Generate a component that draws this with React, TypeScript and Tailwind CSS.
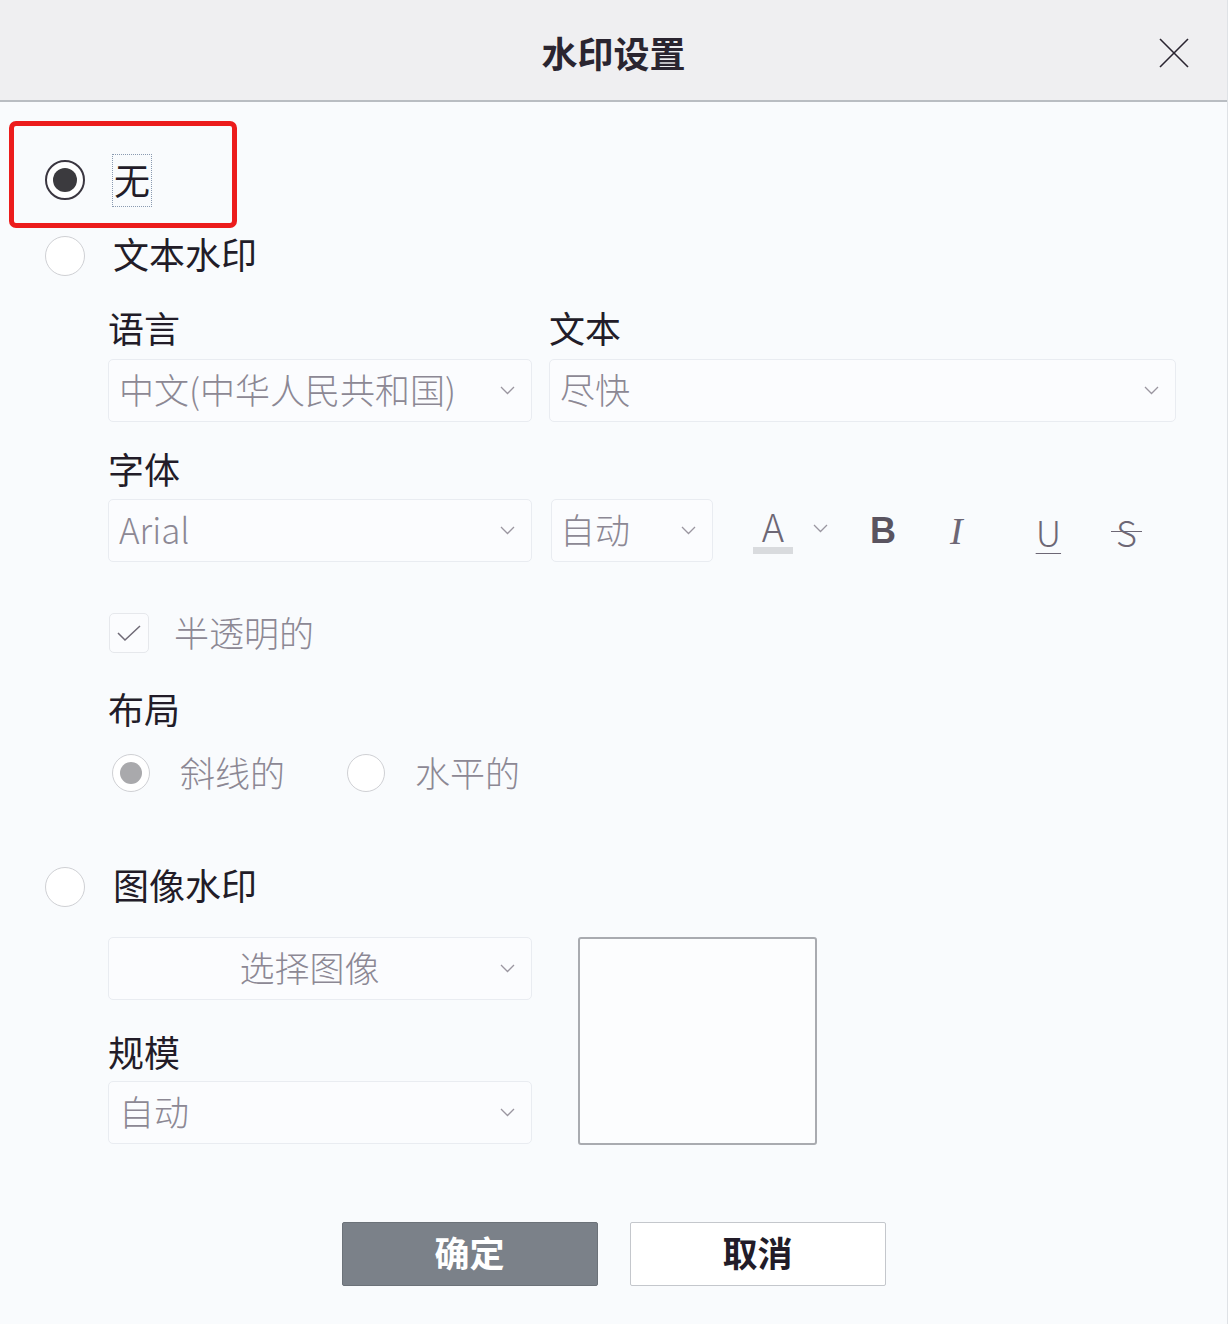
import React from 'react';

const FONT = '"Noto Sans CJK SC", "Noto Sans", sans-serif';

function Chevron() {
    return (
        <svg className="w-[15px] h-[9px] shrink-0" viewBox="0 0 15 9" fill="none" stroke="#9a96a0" strokeWidth="1.3">
            <polyline points="1,1 7.5,7.5 14,1" />
        </svg>
    );
}

function Select({ value, className = '', center = false }: { value: string; className?: string; center?: boolean }) {
    return (
        <div className={`h-[63px] flex items-center rounded-[5px] border border-[#e9ecf1] bg-[#fbfcfe] pl-[10px] pr-[16px] ${className}`}>
            <span className={`flex-1 text-[35px] font-light text-[#8c8894] leading-none whitespace-nowrap pb-[4px] ${center ? 'text-center' : ''}`}>
                {value}
            </span>
            <Chevron />
        </div>
    );
}

function Radio({ checked = false, disabled = false, size = 40 }: { checked?: boolean; disabled?: boolean; size?: number }) {
    const border = checked && !disabled ? 'border-[#3a3640] border-2' : 'border-[#cfd0d4] border';
    return (
        <span
            className={`shrink-0 rounded-full bg-white flex items-center justify-center ${border}`}
            style={{ width: size, height: size }}
        >
            {checked && (
                <span className={`rounded-full ${disabled ? 'w-[22px] h-[22px] bg-[#a9a9ac]' : 'w-[24px] h-[24px] bg-[#3b3a3e]'}`} />
            )}
        </span>
    );
}

function Label({ children, className = '' }: { children: React.ReactNode; className?: string }) {
    return <div className={`h-[44px] flex items-center text-[36px] text-[#221c28] leading-none pb-[4px] ${className}`}>{children}</div>;
}

export default function App() {
    return (
        <div className="w-[1228px] h-[1324px] bg-[#f9fbfd] border-r border-[#dfe2e6] flex flex-col relative" style={{ fontFamily: FONT }}>
            {/* Header */}
            <div className="h-[102px] shrink-0 bg-[#efeff1] border-b-2 border-[#b9bdc2] flex items-center justify-center relative">
                <span className="text-[36px] font-bold text-[#2a2530] leading-none pt-[4px]">水印设置</span>
                <svg className="absolute right-[37px] top-[37px] w-[32px] h-[32px]" viewBox="0 0 32 32" stroke="#2a2530" strokeWidth="1.6">
                    <line x1="2" y1="2" x2="30" y2="30" />
                    <line x1="30" y1="2" x2="2" y2="30" />
                </svg>
            </div>

            {/* Annotation box */}
            <div className="absolute left-[9px] top-[121px] w-[228px] h-[107px] border-[5px] border-[#ec1c1c] rounded-[7px]" />

            {/* None */}
            <div className="mt-[40px] h-[76px] pl-[45px] flex items-center">
                <Radio checked />
                <span className="ml-[27px] text-[36px] text-[#221c28] leading-none border border-dotted border-[#8a9ab0] px-[1px] pt-[6px] pb-[9px]">无</span>
            </div>

            {/* Text watermark */}
            <div className="h-[76px] pl-[45px] flex items-center">
                <Radio />
                <span className="ml-[28px] text-[36px] text-[#221c28] leading-none pb-[7px]">文本水印</span>
            </div>

            <div className="pl-[108px] pr-[51px] flex flex-col">
                <div className="mt-[13px] flex gap-[17px]">
                    <div className="w-[424px] flex flex-col">
                        <Label>语言</Label>
                        <Select value="中文(中华人民共和国)" className="mt-[8px]" />
                    </div>
                    <div className="flex-1 flex flex-col">
                        <Label>文本</Label>
                        <Select value="尽快" className="mt-[8px]" />
                    </div>
                </div>

                <Label className="mt-[26px]">字体</Label>
                <div className="mt-[7px] flex items-center">
                    <div className="w-[424px]">
                        <Select value="Arial" />
                    </div>
                    <Select value="自动" className="ml-[19px] w-[162px] !pl-[8px]" />
                    <div className="ml-[40px] flex items-center">
                        <div className="flex flex-col items-center w-[40px]">
                            <span className="text-[38px] font-light text-[#6d6775] leading-none">A</span>
                            <span className="mt-[2px] w-[40px] h-[7px] bg-[#d9dbde]" />
                        </div>
                        <span className="ml-[20px] mt-[-4px]"><Chevron /></span>
                        <span className="ml-[42px] text-[36px] font-bold text-[#5a5460] leading-none" style={{ fontFamily: '"Liberation Sans", sans-serif' }}>B</span>
                        <span className="ml-[54px] text-[38px] italic font-light text-[#6d6775] leading-none" style={{ fontFamily: '"Liberation Serif", serif' }}>I</span>
                        <span className="ml-[71px] text-[36px] font-light text-[#6d6775] leading-none underline underline-offset-[6px] decoration-1 px-[2px]">U</span>
                        <span className="ml-[48px] relative text-[36px] font-light text-[#6d6775] leading-none px-[5px]">
                            S
                            <span className="absolute left-0 right-0 top-[52%] h-px bg-[#6d6775]" />
                        </span>
                    </div>
                </div>

                <div className="mt-[51px] flex items-center">
                    <span className="w-[40px] h-[40px] ml-[1px] rounded-[5px] border border-[#e6e8ec] bg-[#fbfcfe] flex items-center justify-center">
                        <svg className="w-[26px] h-[20px]" viewBox="0 0 26 20" fill="none" stroke="#6f6a76" strokeWidth="1.5">
                            <polyline points="2,10 9,17 24,3" />
                        </svg>
                    </span>
                    <span className="ml-[25px] text-[35px] font-light text-[#8c8894] leading-none pb-[4px]">半透明的</span>
                </div>

                <Label className="mt-[35px]">布局</Label>
                <div className="mt-[22px] h-[38px] pl-[4px] flex items-center">
                    <Radio checked disabled size={38} />
                    <span className="ml-[30px] text-[35px] font-light text-[#8c8894] leading-none pb-[4px]">斜线的</span>
                    <span className="ml-[62px]"><Radio size={38} /></span>
                    <span className="ml-[30px] text-[35px] font-light text-[#8c8894] leading-none pb-[4px]">水平的</span>
                </div>
            </div>

            {/* Image watermark */}
            <div className="mt-[57px] h-[76px] pl-[45px] flex items-center">
                <Radio />
                <span className="ml-[28px] text-[36px] text-[#221c28] leading-none pb-[7px]">图像水印</span>
            </div>

            <div className="mt-[12px] pl-[108px] flex">
                <div className="w-[424px] flex flex-col">
                    <Select value="选择图像" center />
                    <Label className="mt-[31px]">规模</Label>
                    <Select value="自动" className="mt-[6px]" />
                </div>
                <div className="ml-[46px] w-[239px] h-[208px] border-2 border-[#a9abb0] rounded-[3px] bg-[#fcfdfe]" />
            </div>

            {/* Buttons */}
            <div className="mt-[77px] flex justify-center gap-[32px]">
                <button className="w-[256px] h-[64px] bg-[#7b8189] border border-[#6c7279] rounded-[2px] text-white text-[35px] font-bold leading-none pb-[6px]">确定</button>
                <button className="w-[256px] h-[64px] bg-white border border-[#c4c7cc] rounded-[2px] text-[#221c28] text-[35px] font-bold leading-none pb-[6px]">取消</button>
            </div>
        </div>
    );
}
